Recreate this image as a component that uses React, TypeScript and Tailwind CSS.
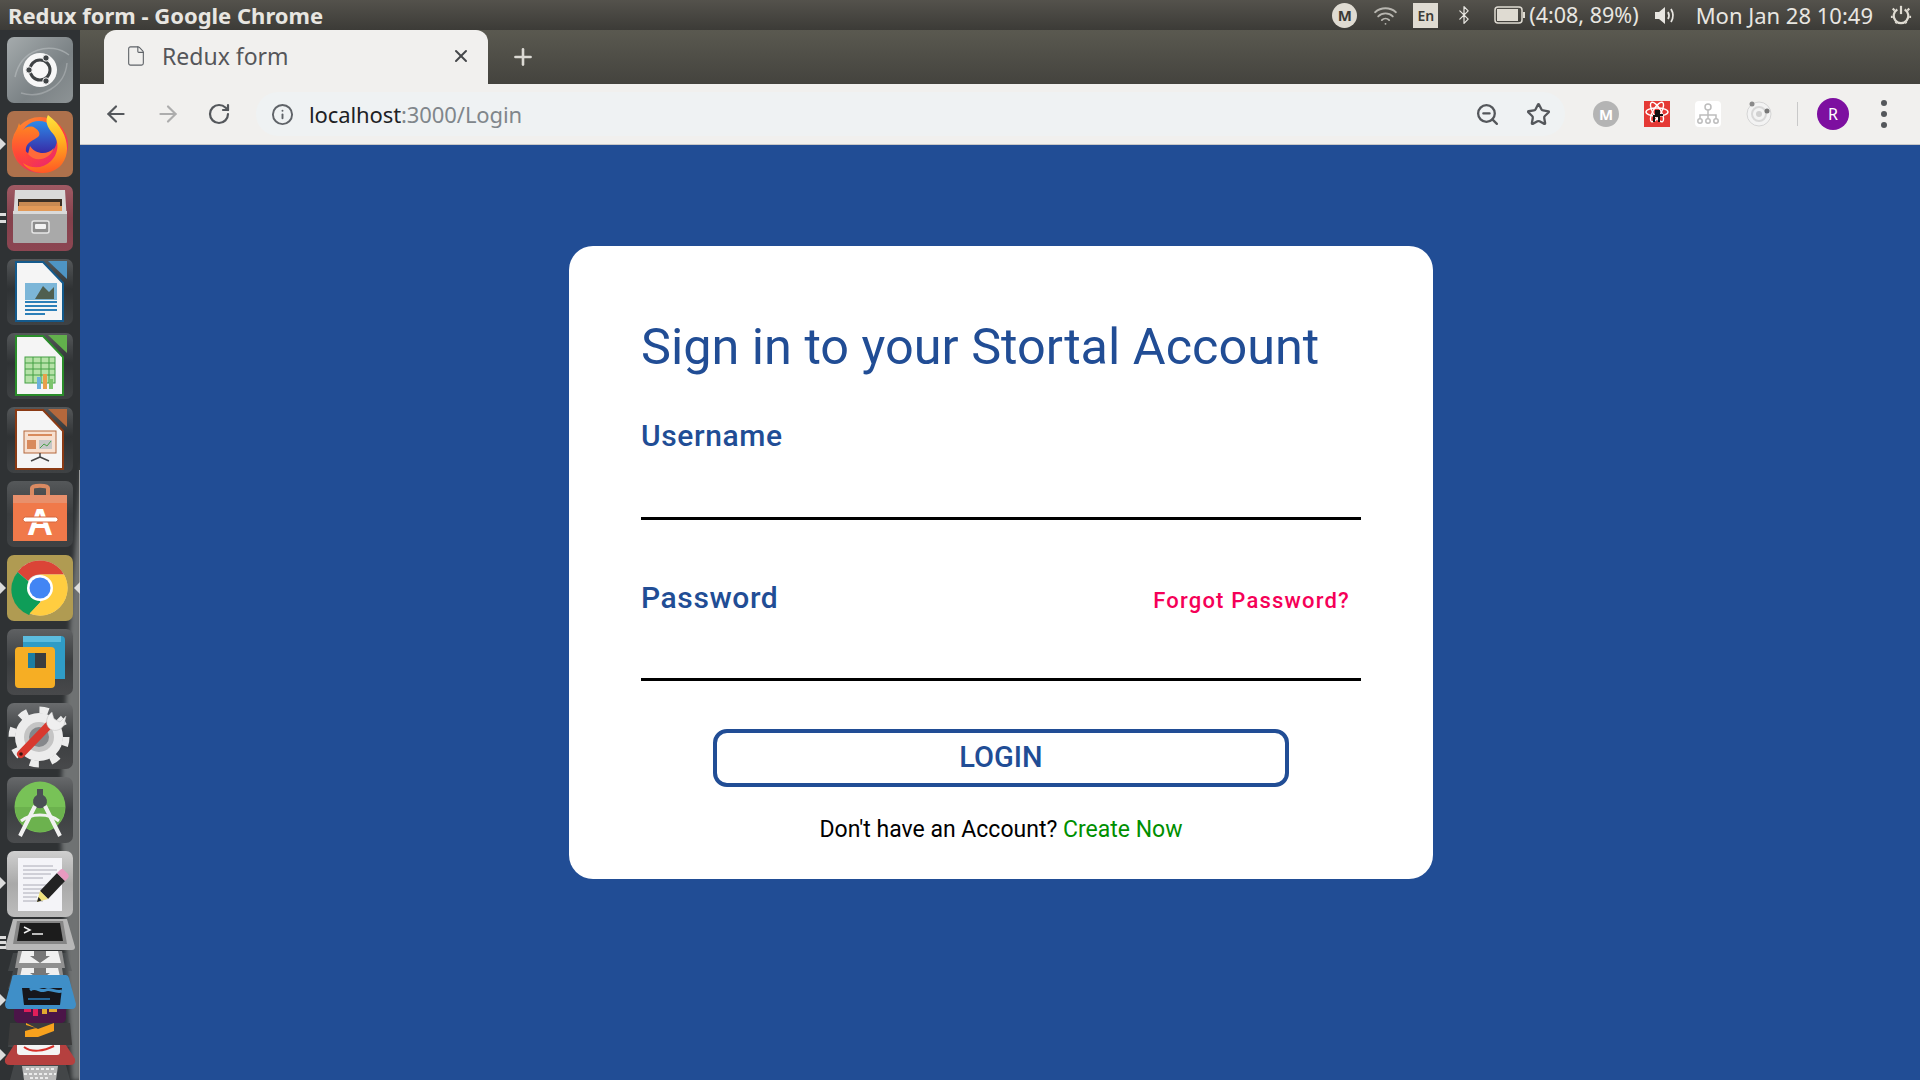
import { ArrowLeft, ArrowRight, Info, Plus, RotateCw, Star, Wifi, X, ZoomOut, Bluetooth, File } from "lucide-react";
import type { ReactNode } from "react";

const Tile = ({ className, children }: { className: string; children: ReactNode }) => (
  <div className={`relative flex size-[66px] shrink-0 items-center justify-center overflow-hidden rounded-[7px] ${className}`}>
    {children}
  </div>
);

const Arrow = ({ side, top }: { side: "left" | "right"; top: number }) => (
  <svg className={`absolute h-[12px] w-[6px] ${side === "left" ? "left-0" : "right-0"}`} style={{ top }} viewBox="0 0 6 12">
    <path d={side === "left" ? "M0 0 L6 6 L0 12 Z" : "M6 0 L0 6 L6 12 Z"} fill="#dcdcdc" />
  </svg>
);

const Pip = ({ top }: { top: number }) => (
  <span className="absolute left-0 h-[3px] w-[6px] bg-[#dcdcdc]" style={{ top }} />
);

const UbuntuIcon = () => (
  <Tile className="bg-[linear-gradient(135deg,#a5abad,#7b8285_60%,#8d9395)]">
    <svg viewBox="0 0 66 66" className="size-[66px]">
      <path d="M8 40 C14 12 44 4 62 18" stroke="#b9bec0" strokeWidth="1.5" fill="none" opacity="0.6" />
      <path d="M14 56 C34 62 58 50 60 26" stroke="#b9bec0" strokeWidth="1.5" fill="none" opacity="0.5" />
      <circle cx="33" cy="33" r="17" fill="#f7f7f7" />
      <circle cx="33" cy="33" r="10" fill="none" stroke="#3f4345" strokeWidth="3" />
      <circle cx="39" cy="21" r="3.2" fill="#3f4345" stroke="#f7f7f7" strokeWidth="1" />
      <circle cx="22" cy="33" r="3.2" fill="#3f4345" stroke="#f7f7f7" strokeWidth="1" />
      <circle cx="39" cy="44" r="3.2" fill="#3f4345" stroke="#f7f7f7" strokeWidth="1" />
    </svg>
  </Tile>
);

const FirefoxIcon = () => (
  <Tile className="bg-[#ae714c]">
    <svg viewBox="0 0 66 66" className="size-[66px]">
      <defs>
        <linearGradient id="ffBase" x1="0" y1="0" x2="0.7" y2="1">
          <stop offset="0" stopColor="#ff9a2e" />
          <stop offset="0.55" stopColor="#ff4538" />
          <stop offset="1" stopColor="#e8207a" />
        </linearGradient>
        <linearGradient id="ffFlame" x1="0.3" y1="0" x2="0.4" y2="1">
          <stop offset="0" stopColor="#ffe83f" />
          <stop offset="0.5" stopColor="#ffb01f" />
          <stop offset="1" stopColor="#ff5a24" />
        </linearGradient>
        <linearGradient id="ffGlobe" x1="0.5" y1="0" x2="0.5" y2="1">
          <stop offset="0" stopColor="#2c8ae8" />
          <stop offset="1" stopColor="#3a1f9e" />
        </linearGradient>
        <linearGradient id="ffHead" x1="0.4" y1="0" x2="0.4" y2="1">
          <stop offset="0" stopColor="#ff8a20" />
          <stop offset="0.6" stopColor="#ff4a36" />
          <stop offset="1" stopColor="#f22c5a" />
        </linearGradient>
      </defs>
      <circle cx="33" cy="34" r="28" fill="url(#ffBase)" />
      <circle cx="32" cy="28" r="18" fill="url(#ffGlobe)" />
      <path d="M12 12 C10 20 5 26 5 35 C7 50 22 62 37 62 C25 57 17 47 19 37 C20 31 27 29 31 26 C34 24 32 19 28 17 C24 14 18 16 15 20 C14 17 13 15 12 12 Z" fill="url(#ffHead)" />
      <path d="M41 4 C37 12 42 18 47 24 C52 31 52 42 44 50 C36 58 24 58 16 52 C22 63 44 67 55 53 C65 40 60 18 41 4 Z" fill="url(#ffFlame)" />
      <path d="M23 35 C28 43 40 45 47 37 C43 49 28 52 21 43 Z" fill="#ff6a3a" />
    </svg>
  </Tile>
);

const FilesIcon = () => (
  <Tile className="bg-[linear-gradient(#a05a64,#84414c_50%,#8c4652)]">
    <svg viewBox="0 0 66 66" className="size-[66px]">
      <path d="M8 5 H58 L60 37 H6 Z" fill="#d9d9d9" />
      <rect x="11" y="14" width="44" height="14" fill="#3a2e24" />
      <rect x="12" y="17" width="41" height="4" fill="#c98a52" />
      <rect x="11" y="21" width="44" height="6" fill="#e39a58" />
      <rect x="6" y="26" width="54" height="32" rx="1" fill="#a9a9a9" />
      <rect x="6" y="26" width="54" height="3" fill="#dadada" />
      <rect x="25" y="36" width="17" height="12" rx="2" fill="#8e8e8e" stroke="#e6e6e6" strokeWidth="1.5" />
      <rect x="28" y="39" width="11" height="5" rx="1" fill="#f2f2f2" />
    </svg>
  </Tile>
);

const OfficeIcon = ({ edge, corner, children }: { edge: string; corner: string; children: ReactNode }) => (
  <Tile className="bg-[linear-gradient(#55585a,#2f3234_45%,#3f4244)]">
    <svg viewBox="0 0 66 66" className="size-[66px]">
      <path d="M41 2 H60 V20 Z" fill={corner} />
      <path d="M9 3 H36 L56 24 V62 H9 Z" fill="#f5f5f5" stroke={edge} strokeWidth="2" />
      {children}
    </svg>
  </Tile>
);

const WriterIcon = () => (
  <OfficeIcon edge="#145a8c" corner="#4e94c4">
    <rect x="18" y="24" width="32" height="17" fill="#7cb6d8" />
    <path d="M28 40 L36 27 L42 33 L47 28 V40 Z" fill="#4f5f50" />
    <rect x="18" y="42" width="32" height="2" fill="#2c7fb8" />
    <rect x="18" y="46" width="32" height="2" fill="#2c7fb8" />
    <rect x="18" y="50" width="32" height="2" fill="#2c7fb8" />
    <rect x="18" y="54" width="20" height="2" fill="#2c7fb8" />
  </OfficeIcon>
);

const CalcIcon = () => (
  <OfficeIcon edge="#2a8c2a" corner="#62b04c">
    <rect x="18" y="24" width="30" height="26" fill="#b6e2a8" stroke="#45a045" />
    <path d="M18 30 H48 M18 36 H48 M18 42 H48 M26 24 V50 M34 24 V50 M42 24 V50" stroke="#45a045" strokeWidth="1" />
    <rect x="30" y="44" width="4" height="12" fill="#6ab0dd" />
    <rect x="36" y="41" width="4" height="15" fill="#e8a04a" />
    <rect x="42" y="46" width="4" height="10" fill="#7cc46c" />
  </OfficeIcon>
);

const ImpressIcon = () => (
  <OfficeIcon edge="#8a3a14" corner="#b5683c">
    <rect x="17" y="24" width="32" height="22" fill="#f7e0d0" stroke="#b5683c" />
    <rect x="21" y="27" width="24" height="2" fill="#d88a5c" />
    <rect x="20" y="33" width="9" height="9" fill="#d88a5c" />
    <rect x="32" y="33" width="13" height="9" fill="#c6c6c6" />
    <path d="M33 41 L37 37 L40 39 L44 34" stroke="#4aa04a" fill="none" />
    <path d="M33 46 V50 M33 50 L24 54 M33 50 L42 54" stroke="#444" strokeWidth="1.5" />
  </OfficeIcon>
);

const SoftwareIcon = () => (
  <Tile className="bg-[linear-gradient(#55585a,#3a3d3f_50%,#3f4244)]">
    <svg viewBox="0 0 66 66" className="size-[66px]">
      <path d="M25 14 V7 C25 4 41 4 41 7 V14" stroke="#d98a62" strokeWidth="4" fill="none" />
      <path d="M6 14 H60 V60 H6 Z" fill="#f0794a" />
      <path d="M6 14 H60 V22 H6 Z" fill="#e8906c" />
      <text x="33" y="54" textAnchor="middle" fontFamily="Liberation Sans, sans-serif" fontWeight="700" fontSize="36" fill="#ffffff">A</text>
      <rect x="16" y="36" width="35" height="5" rx="2.5" fill="#ffffff" stroke="#d8673c" />
    </svg>
  </Tile>
);

const ChromeIcon = () => (
  <Tile className="bg-[#b09b52]">
    <svg viewBox="0 0 66 66" className="size-[66px]">
      <circle cx="33" cy="33" r="27.5" fill="#d9d9d9" />
      <path d="M33 5.5 A27.5 27.5 0 0 1 57 19.5 L33 19.5 A13.5 13.5 0 0 0 21 26 L10.5 17 A27.5 27.5 0 0 1 33 5.5 Z" fill="#db4437" />
      <path d="M10.5 17 L21 26 L33.5 47 L22 60 A27.5 27.5 0 0 1 10.5 17 Z" fill="#0f9d58" />
      <path d="M57 19.5 A27.5 27.5 0 0 1 22.5 58.5 L33.5 47 L45 33 L33 19.5 Z" fill="#ffcd40" />
      <circle cx="33" cy="33" r="13" fill="#ffffff" />
      <circle cx="33" cy="33" r="10.5" fill="#4285f4" />
    </svg>
  </Tile>
);

const VmwareIcon = () => (
  <Tile className="bg-[linear-gradient(#5f6163,#3a3d3f_50%,#48494b)]">
    <svg viewBox="0 0 66 66" className="size-[66px]">
      <rect x="16" y="7" width="42" height="43" rx="4" fill="#2f9cc6" />
      <path d="M16 7 H54 V13 H16 Z" fill="#5cbcdf" />
      <rect x="28" y="24" width="11" height="15" fill="#3a3d3f" />
      <rect x="21" y="24" width="7" height="15" fill="#1b7da3" />
      <path fillRule="evenodd" d="M12 18 H44 A4 4 0 0 1 48 22 V24 H39 V39 H48 V55 A4 4 0 0 1 44 59 H12 A4 4 0 0 1 8 55 V22 A4 4 0 0 1 12 18 Z M21 24 V39 H39 V24 Z" fill="#f6ae24" />
      <rect x="39" y="24" width="9" height="15" fill="#f6ae24" />
      <rect x="48" y="18" width="10" height="32" fill="#2f9cc6" />
    </svg>
  </Tile>
);

const SettingsIcon = () => (
  <Tile className="bg-[linear-gradient(#6a6c6e,#3a3d3f_50%,#48494b)]">
    <svg viewBox="0 0 66 66" className="size-[66px]">
      <circle cx="32" cy="34" r="27" fill="none" stroke="#ececec" strokeWidth="7" strokeDasharray="9 12.2" />
      <circle cx="32" cy="34" r="24" fill="#ececec" />
      <circle cx="32" cy="34" r="15" fill="#c4c4c4" />
      <circle cx="32" cy="34" r="10" fill="#85878a" />
      <path d="M14 51 L43 21" stroke="#d8392f" strokeWidth="8" strokeLinecap="round" />
      <circle cx="14" cy="51" r="1.8" fill="#3a1512" />
      <path d="M45 9 C39 13 38 21 42 25 C46 29 54 28 57 22 L59 13 L53 19 L47 16 Z" fill="#efefef" stroke="#bdbdbd" strokeWidth="0.5" />
    </svg>
  </Tile>
);

const AndroidIcon = () => (
  <Tile className="bg-[linear-gradient(#67696b,#3c3f41_50%,#4a4c4e)]">
    <svg viewBox="0 0 66 66" className="size-[66px]">
      <circle cx="33" cy="30" r="25.5" fill="#78c257" />
      <path d="M8 30 H58 A25 25 0 0 1 8 30 Z" fill="#6cb24e" />
      <path d="M30 12 H36 V18 A7 7 0 1 1 30 18 Z" fill="#4a5054" />
      <path d="M28 29 L13 59 M38 29 L53 59" stroke="#f1f1f1" strokeWidth="4" />
      <path d="M14 44 C24 36 42 36 52 44" stroke="#f1f1f1" strokeWidth="3" fill="none" />
    </svg>
  </Tile>
);

const EditorIcon = () => (
  <Tile className="bg-[linear-gradient(#cfcfcf,#a9a9a9_50%,#bdbdbd)]">
    <svg viewBox="0 0 66 66" className="size-[66px]">
      <rect x="11" y="7" width="44" height="53" fill="#f4f4f8" />
      <path d="M16 15 H46 M16 19 H50 M16 23 H44 M16 27 H36 M16 34 H50 M16 38 H42 M16 42 H34 M16 46 H30 M16 50 H36" stroke="#9a9aa4" strokeWidth="0.8" />
      <path d="M33 40 L50 22 L58 30 L41 48 Z" fill="#232323" />
      <path d="M50 22 L53 19 A3 3 0 0 1 57 19 L61 23 A3 3 0 0 1 61 27 L58 30 Z" fill="#e89ac0" />
      <path d="M33 40 L41 48 L30 51 Z" fill="#f0e27c" />
      <path d="M31.5 46 L34.5 49.5 L30 51 Z" fill="#222222" />
    </svg>
  </Tile>
);

// launcher items squeezed together at the bottom of the dock
const CollapsedStack = () => (
  <svg viewBox="0 0 80 161" className="h-[161px] w-[80px] shrink-0">
    <g fill="#54585a" opacity="0.55">
      <path d="M13 34 H67 L72 52 H8 Z" />
      <path d="M13 52 H67 L72 70 H8 Z" />
      <path d="M12 106 H68 L72 128 H8 Z" />
      <path d="M14 146 H66 L70 161 H10 Z" />
    </g>
    <path d="M13 0 H67 L75 28 Q75 31 72 31 H8 Q5 31 5 28 Z" fill="#b7b7b7" />
    <path d="M17 2 H63 L67 25 H13 Z" fill="#858585" />
    <path d="M20 4 H60 L63 22 H17 Z" fill="#1c1c1c" />
    <path d="M24 8 L30 11 L24 14" stroke="#f2f2f2" strokeWidth="1.5" fill="none" />
    <path d="M32 15 H43" stroke="#f2f2f2" strokeWidth="1.5" />
    <path d="M18 32 H62 L65 49 H15 Z" fill="#909090" />
    <path d="M22 32 H58 L61 44 H19 Z" fill="#f0f0f0" />
    <path d="M34 32 H46 V37 L50 37 L40 44 L30 37 L34 37 Z" fill="#777777" />
    <path d="M18 49 H62 L65 68 H15 Z" fill="#909090" />
    <path d="M22 49 H58 L61 62 H19 Z" fill="#f0f0f0" />
    <path d="M34 49 H46 V54 L50 54 L40 61 L30 54 L34 54 Z" fill="#777777" />
    <path d="M14 56 H66 Q68 56 69 59 L76 85 Q76 90 72 90 H9 Q5 90 5 85 L12 59 Q12 56 14 56 Z" fill="#3f8fc8" />
    <path d="M22 69 H62 L60 86 H24 Z" fill="#16161c" />
    <path d="M30 71 C36 66 40 74 46 71 C50 69 56 74 62 72" stroke="#3f8fc8" strokeWidth="3" fill="none" />
    <path d="M28 80 H50" stroke="#2a80c0" strokeWidth="1.5" />
    <path d="M14 90 H66 L66 98 Q66 104 60 104 H20 Q14 104 14 98 Z" fill="#4b1548" />
    <rect x="24" y="90" width="7" height="3" fill="#e01e5a" />
    <rect x="33" y="90" width="5" height="7" fill="#e01e5a" />
    <rect x="42" y="90" width="5" height="5" fill="#e0a830" />
    <rect x="49" y="90" width="8" height="3" fill="#e0a830" />
    <path d="M10 104 H70 L72 126 H8 Z" fill="#3c3c3c" />
    <path d="M26 104 L38 110 L54 104 V112 L38 118 L25 118 V112 L36 109 L26 106 Z" fill="#f7a11d" />
    <path d="M14 126 H66 L75 140 Q76 146 70 146 H10 Q4 146 5 140 Z" fill="#b5403f" />
    <path d="M17 126 H60 V133 Q60 136 57 136 H20 Q17 136 17 133 Z" fill="#f4f4f4" />
    <path d="M24 128 C32 134 44 132 54 127" stroke="#d6302a" strokeWidth="2" fill="none" />
    <path d="M22 147 H58 L56 161 H24 Z" fill="#b8b8b8" />
    <path d="M26 150 H54 M24 155 H56 M30 159 H50" stroke="#ececec" strokeWidth="2" strokeDasharray="3 2" />
  </svg>
);

const DOCK_ARROWS = [
  { side: "left" as const, top: 138 },
  { side: "left" as const, top: 582 },
  { side: "right" as const, top: 582 },
  { side: "left" as const, top: 877 },
  { side: "left" as const, top: 994 },
  { side: "left" as const, top: 1049 },
];
const DOCK_PIPS = [213, 220, 936, 941, 946];

const Dock = () => (
  <aside className="relative flex w-[80px] shrink-0 flex-col items-center gap-2 overflow-hidden bg-[#2f3234] pt-[7px]">
    {/* wallpaper showing through the launcher */}
    <svg viewBox="0 0 80 1050" preserveAspectRatio="none" className="absolute left-0 top-0 h-[1050px] w-[80px]">
      <defs>
        <filter id="dockBlur">
          <feGaussianBlur stdDeviation="2" />
        </filter>
      </defs>
      <g filter="url(#dockBlur)" fill="#9a9c9d">
        <path d="M82 430 L82 1050 L72 1050 L60 780 L72 560 Z" opacity="0.6" />
      </g>
      <rect x="79" y="440" width="1" height="610" fill="#a5a7a9" opacity="0.9" />
    </svg>
    <UbuntuIcon />
    <FirefoxIcon />
    <FilesIcon />
    <WriterIcon />
    <CalcIcon />
    <ImpressIcon />
    <SoftwareIcon />
    <ChromeIcon />
    <VmwareIcon />
    <SettingsIcon />
    <AndroidIcon />
    <EditorIcon />
    <div className="relative -mt-[6px]">
      <CollapsedStack />
    </div>
    {DOCK_ARROWS.map((a) => (
      <Arrow key={`${a.side}-${a.top}`} side={a.side} top={a.top - 30} />
    ))}
    {DOCK_PIPS.map((top) => (
      <Pip key={top} top={top - 30} />
    ))}
  </aside>
);

const TopPanel = () => (
  <header className="flex h-[30px] shrink-0 items-center justify-between bg-[linear-gradient(#54524c,#3c3b37)] pl-2 pr-[8px] font-['Noto_Sans',sans-serif] text-[#e8e6e1]">
    <span className="text-[22px] font-bold leading-none">Redux form - Google Chrome</span>
    <div className="flex items-center">
      <span className="flex h-[25px] w-[25px] items-center justify-center rounded-full bg-[#dfdbd2] text-[15px] font-bold text-[#3c3b37]">M</span>
      <Wifi className="ml-[16px] size-[25px] text-[#b8b6b0]" strokeWidth={1.8} />
      <span className="ml-[15px] flex h-[25px] w-[25px] items-center justify-center bg-[#dfdbd2] text-[14px] font-semibold text-[#3c3b37]">En</span>
      <Bluetooth className="ml-[16px] size-[20px]" strokeWidth={1.5} />
      <svg viewBox="0 0 32 18" className="ml-[20px] h-[18px] w-[32px]">
        <rect x="1" y="1" width="27" height="16" rx="3" fill="none" stroke="#dfdbd2" strokeWidth="1.5" />
        <rect x="3" y="3" width="21" height="12" fill="#dfdbd2" />
        <rect x="29" y="6" width="2" height="6" fill="#dfdbd2" />
      </svg>
      <span className="ml-[3px] text-[21.5px] leading-none">(4:08, 89%)</span>
      <svg viewBox="0 0 25 25" className="ml-[14px] size-[25px]" fill="none" stroke="#e8e6e1" strokeWidth="1.8">
        <path d="M2 9 H6 L12 4 V21 L6 16 H2 Z" fill="#e8e6e1" stroke="none" />
        <path d="M15 9 Q17 12.5 15 16" />
        <path d="M18 6 Q22 12.5 18 19" />
      </svg>
      <span className="ml-[18px] text-[22px] leading-none">Mon Jan 28 10:49</span>
      <svg viewBox="0 0 24 24" className="ml-[17px] size-[22px]" fill="none" stroke="#dfdbd2" strokeWidth="2.4">
        <path d="M8 6 A8 8 0 1 0 16 6" />
        <path d="M12 2 V11" />
        <path d="M3 5 L5 7 M21 5 L19 7 M1 14 H3 M21 14 H23 M6 21 L7 20 M18 21 L17 20" />
      </svg>
    </div>
  </header>
);

const TabStrip = () => (
  <div className="flex h-[54px] shrink-0 items-end bg-[linear-gradient(#5a5950,#44433e)] pl-6">
    <div className="flex h-[54px] w-[384px] items-center rounded-t-[12px] bg-[#f1f0ee] pb-[2px] pl-[21px] pr-[17px] font-['Noto_Sans',sans-serif]">
      <File className="size-[22px] text-[#5f6368]" strokeWidth={1.2} />
      <span className="ml-[15px] text-[23px] text-[#55565a]">Redux form</span>
      <X className="ml-auto size-[20px] text-[#45474a]" strokeWidth={2.4} />
    </div>
    <Plus className="mb-[14px] ml-[22px] size-[26px] text-[#dcdad4]" strokeWidth={2.4} />
  </div>
);

const Toolbar = () => (
  <div className="flex h-[61px] shrink-0 items-center border-b border-[#c8c8c8] bg-[#f1f0ee] pl-[23px] pr-[24px]">
    <ArrowLeft className="size-[26px] text-[#54575b]" strokeWidth={2} />
    <ArrowRight className="ml-[26px] size-[26px] text-[#adadad]" strokeWidth={2} />
    <RotateCw className="ml-[26px] size-[24px] text-[#54575b]" strokeWidth={2.2} />
    <div className="ml-[25px] flex h-[44px] w-[1309px] items-center rounded-full bg-[#eff2f3] pl-[15px] pr-[14px] font-['Noto_Sans',sans-serif]">
      <Info className="size-[23px] text-[#5f6368]" strokeWidth={2} />
      <span className="ml-[15px] text-[22px] tracking-[-0.1px] text-[#202124]">
        localhost<span className="text-[#80868b]">:3000/Login</span>
      </span>
      <ZoomOut className="ml-auto size-[25px] text-[#54575b]" strokeWidth={2.2} />
      <Star className="ml-[26px] size-[25px] text-[#54575b]" strokeWidth={2.2} />
    </div>
    <span className="ml-[28px] flex size-[26px] items-center justify-center rounded-full bg-[#b4b4b4] text-[15px] font-bold text-white">M</span>
    <svg viewBox="0 0 26 26" className="ml-[25px] size-[26px]">
      <rect width="26" height="26" fill="#e53935" />
      <g fill="none" stroke="#ffffff" strokeWidth="1.4">
        <ellipse cx="13" cy="11" rx="11" ry="4" />
        <ellipse cx="13" cy="11" rx="11" ry="4" transform="rotate(60 13 11)" />
        <ellipse cx="13" cy="11" rx="11" ry="4" transform="rotate(120 13 11)" />
      </g>
      <path d="M11 9 H16 V13 H19 V15 H16 V21 H14 V16 H11 V21 H9 V14 H11 Z" fill="#111111" />
    </svg>
    <svg viewBox="0 0 26 26" className="ml-[25px] size-[26px]">
      <rect width="26" height="26" rx="4" fill="#ffffff" />
      <g fill="none" stroke="#bdbdbd" strokeWidth="1.5">
        <circle cx="13" cy="6" r="3" />
        <path d="M13 9 V14 M5 18 V14 H21 V18 M13 14 V18" />
        <circle cx="5" cy="20" r="2.2" />
        <circle cx="13" cy="20" r="2.2" />
        <circle cx="21" cy="20" r="2.2" />
      </g>
    </svg>
    <svg viewBox="0 0 26 26" className="ml-[25px] size-[26px]">
      <circle cx="13" cy="13" r="12" fill="#f3f3f3" stroke="#d5d5d5" />
      <circle cx="13" cy="13" r="7" fill="none" stroke="#d8d8d8" strokeWidth="2" />
      <circle cx="13" cy="13" r="3" fill="#d0d0d0" />
      <circle cx="6" cy="3" r="2.5" fill="#8a8a8a" />
      <circle cx="21" cy="10" r="2.5" fill="#777777" />
    </svg>
    <div className="ml-[25px] h-[24px] w-px bg-[#c9c9c9]" />
    <span className="ml-[19px] flex size-[32px] items-center justify-center rounded-full bg-[#7d0fa0] font-['Noto_Sans',sans-serif] text-[16px] text-white">R</span>
    <span className="ml-[32px] flex flex-col gap-[5px]">
      <span className="size-[6px] rounded-full bg-[#54575b]" />
      <span className="size-[6px] rounded-full bg-[#54575b]" />
      <span className="size-[6px] rounded-full bg-[#54575b]" />
    </span>
  </div>
);

const LoginCard = () => (
  <form className="ml-[2px] mt-[101px] flex h-[633px] w-[864px] flex-col rounded-[24px] bg-white px-[72px] pt-[69px] font-['Roboto',sans-serif]">
    <h1 className="text-[50.4px] leading-[64px] text-[#214d95]">Sign in to your Stortal Account</h1>
    <label className="mt-[37px] block text-[30px] font-medium leading-[40px] tracking-[0.6px] text-[#214d95]">Username</label>
    <div className="mt-[61px] h-[3px] bg-black" />
    <div className="mt-[58px] flex items-center justify-between pr-[11px]">
      <label className="text-[30px] font-medium leading-[40px] tracking-[0.6px] text-[#214d95]">Password</label>
      <a className="mt-[4px] text-[22px] font-medium tracking-[1.2px] text-[#f50057]">Forgot Password?</a>
    </div>
    <div className="mt-[60px] h-[3px] bg-black" />
    <button type="button" className="mx-auto mt-[48px] flex h-[58px] w-[576px] items-center justify-center rounded-[14px] border-[4px] border-[#214d95] text-[29px] font-medium text-[#214d95]">
      LOGIN
    </button>
    <p className="mt-[28px] text-center text-[23px] leading-[30px] text-black">
      Don't have an Account? <a className="text-[#008f00]">Create Now</a>
    </p>
  </form>
);

export default function App() {
  return (
    <div className="flex h-screen w-screen flex-col overflow-hidden">
      <TopPanel />
      <div className="flex min-h-0 flex-1">
        <Dock />
        <div className="flex min-w-0 flex-1 flex-col">
          <TabStrip />
          <Toolbar />
          <main className="flex flex-1 justify-center bg-[#214d95]">
            <LoginCard />
          </main>
        </div>
      </div>
    </div>
  );
}
